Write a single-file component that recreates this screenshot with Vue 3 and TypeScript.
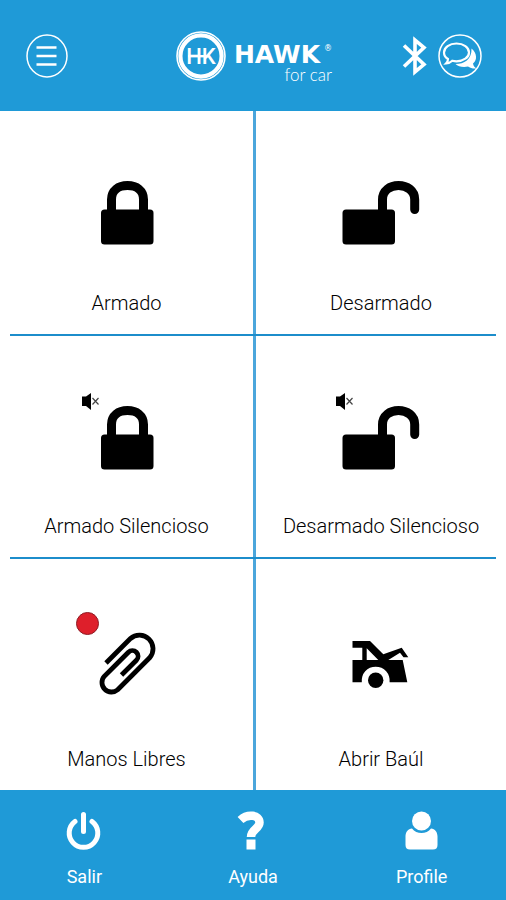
<script setup lang="ts">
interface Action {
  id: string
  label: string
  icon: 'lock' | 'unlock' | 'clip' | 'trunk'
  badge?: 'mute' | 'dot'
}

const rows: Action[][] = [
  [
    { id: 'arm', label: 'Armado', icon: 'lock' },
    { id: 'disarm', label: 'Desarmado', icon: 'unlock' },
  ],
  [
    { id: 'arm-silent', label: 'Armado Silencioso', icon: 'lock', badge: 'mute' },
    { id: 'disarm-silent', label: 'Desarmado Silencioso', icon: 'unlock', badge: 'mute' },
  ],
  [
    { id: 'hands-free', label: 'Manos Libres', icon: 'clip', badge: 'dot' },
    { id: 'trunk', label: 'Abrir Baúl', icon: 'trunk' },
  ],
]
</script>

<template>
  <div class="screen">
    <header class="bar">
      <button class="round" type="button" aria-label="Menu">
        <svg width="42" height="44" viewBox="0 0 42 44" fill="none" stroke="#fff">
          <ellipse cx="21" cy="22" rx="20" ry="21" stroke-width="1.5" />
          <path d="M10.5 13.5h20M10.5 22h20M10.5 30.5h20" stroke-width="2.4" />
        </svg>
      </button>

      <div class="brand">
        <svg class="emblem" width="50" height="50" viewBox="0 0 50 50" fill="none" stroke="#fff">
          <circle cx="25" cy="25" r="24" stroke-width="1.6" />
          <circle cx="25" cy="25" r="20.6" stroke-width="4.2" />
          <text class="monogram" x="25" y="33" text-anchor="middle" fill="#fff" stroke="none">HK</text>
          <path d="M12 25.2h19" stroke-width="2.4" />
        </svg>
        <div class="words">
          <span class="name">HAWK<sup class="reg">®</sup></span>
          <span class="tagline">for car</span>
        </div>
      </div>

      <div class="tools">
        <button class="round" type="button" aria-label="Bluetooth">
          <svg width="26" height="40" viewBox="0 0 26 40" fill="none" stroke="#fff" stroke-width="3.6">
            <path d="M2 9.5 22 28.5 13 36V4L22 11.500 2 30.500" stroke-linejoin="miter" />
          </svg>
        </button>
        <button class="round" type="button" aria-label="Chat">
          <svg width="44" height="44" viewBox="0 0 44 44" fill="none" stroke="#fff">
            <circle cx="22" cy="22" r="21" stroke-width="1.5" />
            <path d="M33.500 14.500C39 19 39.500 26 35 29.500C35.500 32 36.500 33 38.500 34.500C35 34.800 32 34 30 32.500C25 33.500 20 32.500 17.500 30C26 30 34 25.500 33.500 14.500Z" fill="#fff" stroke="none" />
            <path d="M18.500 9.500C25.500 9.500 31 13.400 31 18.400S25.500 27.300 18.500 27.300C17 27.300 15.600 27.100 14.300 26.800C12.500 28.500 10.500 29.400 8 29.500C9.300 28.200 10 26.700 10 25C7.500 23.400 6 21 6 18.400C6 13.400 11.500 9.500 18.500 9.500Z" stroke-width="2.200" />
          </svg>
        </button>
      </div>
    </header>

    <main class="grid">
      <template v-for="(row, index) in rows" :key="index">
        <hr v-if="index > 0" class="rule" />
        <button v-for="action in row" :key="action.id" class="tile" type="button">
          <span class="icon">
            <svg v-if="action.icon === 'lock'" width="92" height="64" viewBox="0 0 92 64">
              <rect x="20" y="28.500" width="52.500" height="35" rx="3.500" />
              <path d="M30.500 32V18.500C30.500 9.500 37.500 4.500 46.500 4.500S62.500 9.500 62.500 18.500V32" fill="none" stroke="#000" stroke-width="9" />
            </svg>
            <svg v-else-if="action.icon === 'unlock'" width="92" height="64" viewBox="0 0 92 64">
              <rect x="7.500" y="28.500" width="52.500" height="35" rx="3.500" />
              <path d="M47.500 32V18.500C47.500 9.500 55 4.500 63.500 4.500S79.700 9.500 79.700 18.500V28.500" fill="none" stroke="#000" stroke-width="9" stroke-linecap="round" />
            </svg>
            <svg v-else-if="action.icon === 'clip'" width="92" height="68" viewBox="0 -3 92 68" fill="none" stroke="#000" stroke-width="4.800">
              <path d="M25 31 49.400 6.600A13.600 13.600 0 0 1 68.600 25.800L36.700 57.700A9.500 9.500 0 0 1 23.300 44.300L47.400 20.200A5.650 5.650 0 0 1 55.400 28.200L40.500 43" />
            </svg>
            <svg v-else width="92" height="68" viewBox="0 -3 92 68">
              <path d="M17.500 9H35L48.300 22.300 66.700 15.700 73.300 25.300H68.500L65 20.700 53.300 28H67.700L72.300 50.300H54.600A14 14 0 1 0 26.800 50.300H17.500V28H27.300V15.700H17.500ZM31.700 16.300V28H43.300Z" fill-rule="evenodd" />
              <circle cx="40.700" cy="48.300" r="7.700" />
            </svg>
            <svg v-if="action.badge === 'mute'" class="mute" width="19" height="17" viewBox="0 0 19 17">
              <path d="M1 3.500H5L10 0V17L5 13H1Z" />
              <path d="M11.500 5 17.500 11.500M17.500 5 11.500 11.500" fill="none" stroke="#444" stroke-width="1.200" />
            </svg>
            <span v-if="action.badge === 'dot'" class="dot"></span>
          </span>
          <span class="label">{{ action.label }}</span>
        </button>
      </template>
    </main>

    <nav class="dock">
      <button class="dock-item" type="button">
        <svg width="40" height="40" viewBox="0 0 40 40" fill="none" stroke="#fff" stroke-width="5" stroke-linecap="round">
          <path d="M11 10.500A14.300 14.300 0 1 0 28 10.500M19.500 3.500V20.500" />
        </svg>
        <span>Salir</span>
      </button>
      <button class="dock-item" type="button">
        <svg width="40" height="40" viewBox="0 0 40 40">
          <path d="M7.500 9C14.500 2.500 26.500 3.500 26.500 11.500C26.500 18 18 18 18 26" fill="none" stroke="#fff" stroke-width="8.500" />
          <rect x="13.500" y="28.500" width="9" height="10" fill="#fff" />
        </svg>
        <span>Ayuda</span>
      </button>
      <button class="dock-item" type="button">
        <svg width="40" height="40" viewBox="0 0 40 40" fill="#fff">
          <circle cx="19.500" cy="10" r="9.500" />
          <path d="M10 17.500C14.500 23.500 24.500 23.500 29 17.500C33 18 35.500 21 35.500 25.500V34Q35.500 38.500 31 38.500H8Q3.500 38.500 3.500 34V25.500C3.500 21 6 18 10 17.500Z" />
        </svg>
        <span>Profile</span>
      </button>
    </nav>
  </div>
</template>

<style>
body {
  margin: 0;
  background: #fff;
}
</style>

<style scoped>
.screen {
  display: flex;
  flex-direction: column;
  min-height: 100vh;
  font-family: Roboto, "Liberation Sans", sans-serif;
}

button {
  margin: 0;
  padding: 0;
  border: 0;
  background: none;
  font: inherit;
  color: inherit;
  cursor: pointer;
}

svg {
  display: block;
}

.bar {
  display: grid;
  grid-template-columns: 1fr auto 1fr;
  align-items: center;
  box-sizing: border-box;
  height: 111px;
  padding: 0 24px 0 26px;
  background: #1f9ad7;
  color: #fff;
}

.round {
  justify-self: start;
}

.brand {
  display: flex;
  align-items: center;
  gap: 8px;
}

.monogram {
  font-family: Roboto, sans-serif;
  font-size: 22px;
  font-weight: 500;
}

.words {
  display: flex;
  flex-direction: column;
  padding-top: 16px;
}

.name {
  display: flex;
  font-family: "DejaVu Sans", sans-serif;
  font-size: 25px;
  font-weight: 700;
  line-height: 22px;
}

.reg {
  margin: 0 0 0 4px;
  font-size: 8px;
  font-weight: 400;
  line-height: 10px;
}

.tagline {
  align-self: flex-end;
  font-family: Lato, sans-serif;
  font-size: 17px;
  font-weight: 300;
  line-height: 18px;
}

.tools {
  display: flex;
  align-items: center;
  justify-content: flex-end;
  gap: 10px;
}

.grid {
  flex: 1;
  display: grid;
  grid-template-columns: 1fr 1fr;
  grid-template-rows: 223fr 2px 221fr 2px 231fr;
}

.rule {
  grid-column: 1 / -1;
  width: auto;
  height: 2px;
  margin: 0 10px;
  border: 0;
  background: #1c8dcb;
}

.tile {
  display: flex;
  flex-direction: column;
  align-items: center;
  justify-content: space-between;
  padding: 70px 0 19px;
  color: #000;
}

.tile:nth-of-type(even) {
  border-left: 3px solid #4ba6dc;
}

.icon {
  position: relative;
}

.mute {
  position: absolute;
  top: -13px;
  left: 0;
}

.dot {
  position: absolute;
  top: -17px;
  left: -5px;
  box-sizing: border-box;
  width: 23px;
  height: 23px;
  border: 1px solid #8e1c24;
  border-radius: 50%;
  background: #de1f2b;
}

.label {
  font-size: 20px;
  font-weight: 300;
  line-height: 24px;
}

.dock {
  display: grid;
  grid-template-columns: repeat(3, 1fr);
  box-sizing: border-box;
  height: 110px;
  padding: 21px 0 11px;
  background: #1f9ad7;
  color: #fff;
}

.dock-item {
  display: flex;
  flex-direction: column;
  align-items: center;
  justify-content: space-between;
  font-size: 18px;
  line-height: 24px;
}
</style>
